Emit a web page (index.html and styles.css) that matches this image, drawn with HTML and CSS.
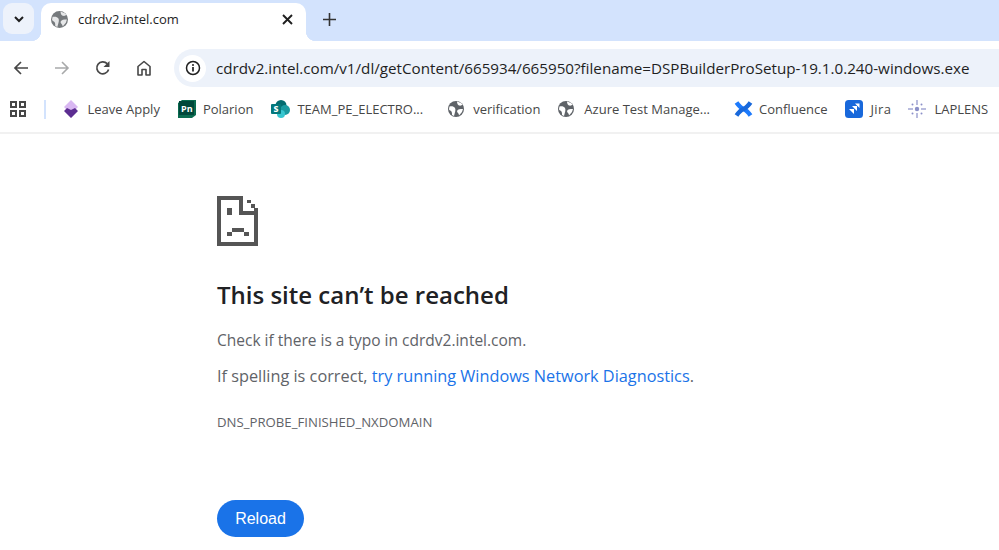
FILE: index.html
```html
<!DOCTYPE html>
<html lang="en">
<head>
    <meta charset="UTF-8">
    <meta name="viewport" content="width=device-width, initial-scale=1.0">
    <title>cdrdv2.intel.com</title>
    <link rel="stylesheet" href="styles.css">
</head>
<body>
    <div class="tabstrip">
        <div class="tabsearch">
            <svg width="12" height="12" viewBox="0 0 12 12"><path d="M2 4l4 4 4-4" fill="none" stroke="#1f1f1f" stroke-width="2"/></svg>
        </div>
        <div class="tab">
            <svg class="globe" width="17" height="17" viewBox="0 0 16 16"><circle cx="8" cy="8" r="8" fill="#75797c"/><path d="M1.500 5.500C4 5 6 5.500 7 7c1 2 0 4-1 8l-2-1c0-2 0-3-1-4-1-.5-2-1-2-2zM9 .5c0 2.500 1 3.500 2 4 2 .5 3 -.5 3.500-1L13 2zM9 10c1-2 3-2 6-2l-1 3-3 3.500c0-2.500-2-2.500-2-4.500z" fill="#e6e7e8"/></svg>
            <span class="tabtitle">cdrdv2.intel.com</span>
            <svg class="tabclose" width="11" height="11" viewBox="0 0 11 11"><path d="M1 1l9 9M10 1l-9 9" stroke="#1f1f1f" stroke-width="1.9"/></svg>
        </div>
        <svg class="newtab" width="13" height="13" viewBox="0 0 13 13"><path d="M6.5 0v13M0 6.5h13" stroke="#333" stroke-width="1.6"/></svg>
    </div>

    <div class="toolbar">
        <div class="navbtns">
            <svg width="16" height="16" viewBox="0 0 16 16"><path d="M15 8H2M8 2L2 8l6 6" fill="none" stroke="#474747" stroke-width="1.7"/></svg>
            <svg width="16" height="16" viewBox="0 0 16 16"><path d="M1 8h13M8 2l6 6-6 6" fill="none" stroke="#a8a9aa" stroke-width="1.6"/></svg>
            <svg width="16" height="16" viewBox="0 0 16 16"><path d="M13.6 9.5A6 6 0 1 1 12.2 3.7" fill="none" stroke="#474747" stroke-width="1.7"/><path d="M14.5 1v6h-6z" fill="#474747"/></svg>
            <svg width="16" height="16" viewBox="0 0 16 16"><path d="M2 15V6.500L8 1.500l6 5V15h-4V9.500H6V15z" fill="none" stroke="#474747" stroke-width="1.600" stroke-linejoin="round"/></svg>
        </div>
        <div class="omnibox">
            <div class="infobtn">
                <svg width="16" height="16" viewBox="0 0 16 16"><circle cx="8" cy="8" r="6.500" fill="none" stroke="#1f1f1f" stroke-width="1.500"/><path d="M8 7v4.500" stroke="#1f1f1f" stroke-width="1.700"/><circle cx="8" cy="5" r="1" fill="#1f1f1f"/></svg>
            </div>
            <span class="url">cdrdv2.intel.com/v1/dl/getContent/665934/665950?filename=DSPBuilderProSetup-19.1.0.240-windows.exe</span>
        </div>
    </div>

    <div class="bookmarks">
        <svg class="apps" width="16" height="16" viewBox="0 0 16 16"><path d="M1 1h5v5H1zM10 1h5v5h-5zM1 10h5v5H1zM10 10h5v5h-5z" fill="none" stroke="#474747" stroke-width="2"/></svg>
        <div class="sep"></div>
        <div class="bm bm-leave">
            <svg width="16" height="18" viewBox="0 0 16 18"><path d="M8 0l7 7-7 7-7-7z" fill="#d9b8f2"/><path d="M1 11l3-3 4 2 4-2 3 3-7 7z" fill="#5c2d91"/></svg>
            <span>Leave Apply</span>
        </div>
        <div class="bm bm-pol">
            <svg width="18" height="18" viewBox="0 0 18 18"><path d="M0 3l4-3h14v15l-4 3H0z" fill="#0a6b4f"/><rect x="1" y="1" width="15" height="14" fill="#00473a"/><text x="3" y="12" class="pn">Pn</text></svg>
            <span>Polarion</span>
        </div>
        <div class="bm bm-team">
            <svg width="19" height="18" viewBox="0 0 19 18"><circle cx="10" cy="5.500" r="5.500" fill="#036c70"/><circle cx="14" cy="10" r="5" fill="#1a9ba1"/><circle cx="10" cy="14" r="4" fill="#37c6d0"/><rect x="0" y="4" width="10" height="10" rx="1" fill="#03787c"/><text x="2.500" y="12" class="sp">s</text></svg>
            <span>TEAM_PE_ELECTRO...</span>
        </div>
        <div class="bm bm-ver">
            <svg width="16" height="16" viewBox="0 0 16 16"><circle cx="8" cy="8" r="8" fill="#5f6368"/><path d="M1.500 5.500C4 5 6 5.500 7 7c1 2 0 4-1 8l-2-1c0-2 0-3-1-4-1-.5-2-1-2-2zM9 .5c0 2.500 1 3.500 2 4 2 .5 3 -.5 3.500-1L13 2zM9 10c1-2 3-2 6-2l-1 3-3 3.500c0-2.500-2-2.500-2-4.500z" fill="#fff"/></svg>
            <span>verification</span>
        </div>
        <div class="bm bm-azure">
            <svg width="16" height="16" viewBox="0 0 16 16"><circle cx="8" cy="8" r="8" fill="#5f6368"/><path d="M1.500 5.500C4 5 6 5.500 7 7c1 2 0 4-1 8l-2-1c0-2 0-3-1-4-1-.5-2-1-2-2zM9 .5c0 2.500 1 3.500 2 4 2 .5 3 -.5 3.500-1L13 2zM9 10c1-2 3-2 6-2l-1 3-3 3.500c0-2.500-2-2.500-2-4.500z" fill="#fff"/></svg>
            <span>Azure Test Manage...</span>
        </div>
        <div class="bm bm-conf">
            <svg width="19" height="18" viewBox="0 0 19 18"><path d="M2.500 2.500C5 6 7 8 9.500 9S14 12 16.500 15.500" fill="none" stroke="#1d7afc" stroke-width="4.500"/><path d="M16.500 2.500C14 6 12 8 9.500 9S5 12 2.500 15.500" fill="none" stroke="#1868db" stroke-width="4.500"/></svg>
            <span>Confluence</span>
        </div>
        <div class="bm bm-jira">
            <svg width="18" height="18" viewBox="0 0 18 18"><rect width="18" height="18" rx="3.500" fill="#1868db"/><path d="M4 9h5v5zM7 6h5v5zM10 3.500h4.500V8z" fill="#fff"/></svg>
            <span>Jira</span>
        </div>
        <div class="bm bm-lap">
            <svg width="18" height="18" viewBox="0 0 18 18"><g fill="#8b90c8"><circle cx="9" cy="9" r="2.200"/><rect x="8.400" y="0" width="1.200" height="5"/><rect x="8.400" y="13" width="1.200" height="5"/><rect x="0" y="8.400" width="5" height="1.200"/><rect x="13" y="8.400" width="5" height="1.200"/><circle cx="4.500" cy="4.500" r="1"/><circle cx="13.500" cy="4.500" r="1"/><circle cx="4.500" cy="13.500" r="1"/><circle cx="13.500" cy="13.500" r="1"/></g></svg>
            <span>LAPLENS</span>
        </div>
    </div>

    <main class="errpage">
        <svg class="sadfile" width="41" height="50" viewBox="0 0 41 50" shape-rendering="crispEdges">
            <path fill="#555" d="M0 0h26v4H0zM0 0h4v50H0zM0 46h41v4H0zM37 12h4v38h-4zM22 0h4v19h-4zM22 15h19v4H22z"/>
            <path fill="#555" d="M30 4h4v3h-4zM34 8h4v4h-4zM10 12h5v7h-5zM15 32h12v4H15zM10 36h5v4h-5zM27 36h5v4h-5z"/>
        </svg>
        <h1>This site can’t be reached</h1>
        <p class="hint">Check if there is a typo in cdrdv2.intel.com.</p>
        <p class="hint hint2">If spelling is correct, <a href="#">try running Windows Network Diagnostics</a>.</p>
        <p class="code">DNS_PROBE_FINISHED_NXDOMAIN</p>
        <button class="reload">Reload</button>
    </main>
</body>
</html>
```

FILE: styles.css
```css
* {
    margin: 0;
    padding: 0;
    box-sizing: border-box;
}

html, body {
    height: 550px;
    overflow: hidden;
}

body {
    background-color: #fff;
    font-family: "Open Sans", "Noto Sans", sans-serif;
    color: #1f1f1f;
}

.tabstrip {
    height: 41px;
    background-color: #d3e3fd;
    display: flex;
    align-items: flex-end;
    padding-left: 3px;
}

.tabsearch {
    width: 31px;
    height: 31px;
    margin-bottom: 7px;
    background-color: #edf2fb;
    border-radius: 9px;
    display: flex;
    align-items: center;
    justify-content: center;
}

.tab {
    position: relative;
    width: 265px;
    height: 38px;
    margin-left: 7px;
    padding: 0 13px 6px 10px;
    background-color: #fff;
    border-radius: 10px 10px 0 0;
    display: flex;
    align-items: center;
}

.tab::before,
.tab::after {
    content: "";
    position: absolute;
    bottom: 0;
    width: 10px;
    height: 10px;
}

.tab::before {
    left: -10px;
    background: radial-gradient(circle at 0 0, #d3e3fd 10px, #fff 10.5px);
}

.tab::after {
    right: -10px;
    background: radial-gradient(circle at 100% 0, #d3e3fd 10px, #fff 10.5px);
}

.tabtitle {
    margin-left: 10px;
    font-size: 13px;
    flex: 1;
}

.newtab {
    margin: 0 0 15px 17px;
}

.toolbar {
    height: 47px;
    padding: 8px 0 1px;
    display: flex;
    align-items: center;
}

.navbtns {
    width: 174px;
    padding-left: 13px;
    display: flex;
    gap: 25px;
}

.omnibox {
    flex: 1;
    height: 38px;
    background-color: #edf2fa;
    border-radius: 19px 0 0 19px;
    display: flex;
    align-items: center;
    padding-left: 5px;
}

.infobtn {
    width: 27px;
    height: 27px;
    background-color: #fff;
    border-radius: 50%;
    display: flex;
    align-items: center;
    justify-content: center;
}

.url {
    margin-left: 10px;
    font-size: 15.2px;
    white-space: nowrap;
}

.bookmarks {
    height: 46px;
    padding: 0 0 2px 10px;
    border-bottom: 2px solid #f1f1f1;
    display: flex;
    align-items: center;
    font-size: 13px;
    color: #474747;
}

.apps {
    flex-shrink: 0;
}

.sep {
    flex-shrink: 0;
    width: 1.5px;
    height: 19px;
    margin: 0 17px 0 18px;
    background-color: #d3e3fd;
}

.bm {
    display: flex;
    align-items: center;
    gap: 7px;
    white-space: nowrap;
    margin-right: 18px;
}

.bm svg {
    flex-shrink: 0;
}

.bm-leave {
    gap: 9px;
}

.bm-team {
    margin-right: 25px;
}

.bm-ver {
    gap: 9px;
}

.bm-azure {
    gap: 10px;
    margin-right: 24px;
}

.bm-conf {
    gap: 6px;
}

.bm-jira {
    margin-right: 17px;
}

.bm-jira span {
    letter-spacing: 0.4px;
}

.bm-lap {
    gap: 8px;
    margin-right: 0;
}

.pn {
    font-size: 9px;
    font-weight: 700;
    fill: #fff;
}

.sp {
    font-size: 10px;
    font-weight: 700;
    fill: #fff;
}

.errpage {
    padding: 62px 0 0 217px;
}

.sadfile {
    display: block;
}

h1 {
    margin-top: 33px;
    font-size: 24px;
    line-height: 32px;
    font-weight: 600;
    color: #202124;
}

.hint {
    margin-top: 17px;
    font-size: 15.5px;
    line-height: 24px;
    color: #5f6368;
}

.hint2 {
    margin-top: 12px;
    font-size: 16.3px;
}

.hint2 a {
    color: #1a73e8;
    text-decoration: none;
}

.code {
    margin-top: 26px;
    font-size: 13.2px;
    line-height: 16px;
    color: #5f6368;
}

.reload {
    display: block;
    margin-top: 70px;
    width: 87px;
    height: 37px;
    background-color: #1a73e8;
    color: #fff;
    border: none;
    border-radius: 19px;
    font-family: "Liberation Sans", sans-serif;
    font-size: 16px;
}
```
